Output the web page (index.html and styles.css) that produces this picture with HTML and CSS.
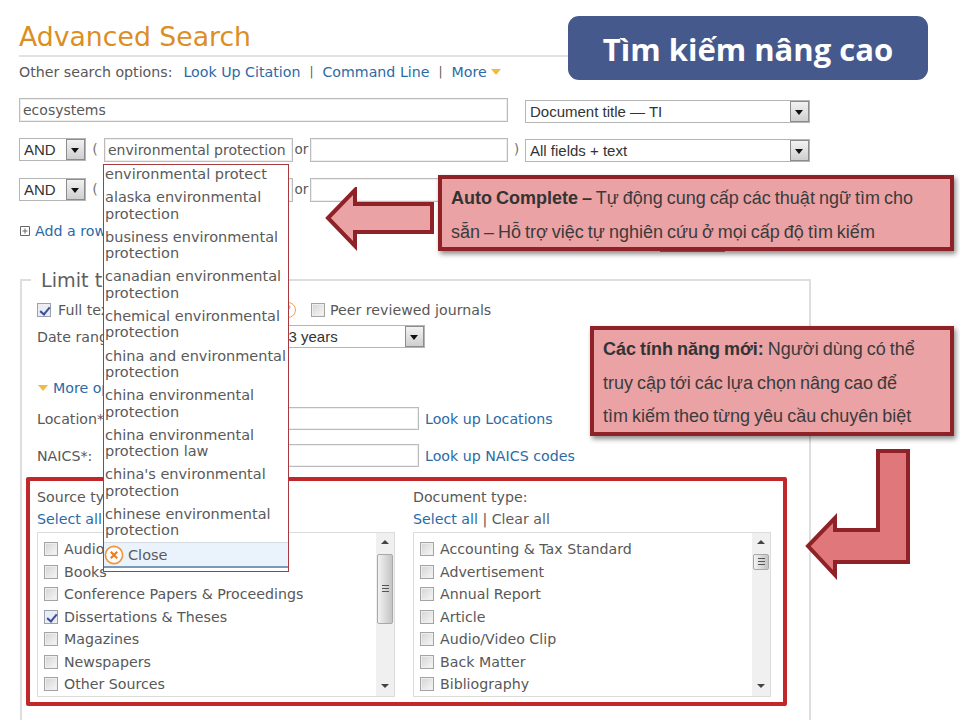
FILE: index.html
```html
<!DOCTYPE html>
<html lang="vi">
<head>
<meta charset="utf-8">
<title>Advanced Search</title>
<link rel="stylesheet" href="styles.css">
</head>
<body>
<main class="page">
  <h1 class="title">Advanced Search</h1>
  <nav class="options">
    <span>Other search options:</span>
    <a class="link first">Look Up Citation</a><span class="sep">|</span>
    <a class="link">Command Line</a><span class="sep">|</span>
    <a class="link">More</a><span class="tri"></span>
  </nav>

  <div class="row row-1">
    <div class="field wide">ecosystems</div>
    <div class="select sel-field"><span class="sel-text">Document title — TI</span><span class="sel-btn"></span></div>
  </div>
  <div class="row row-2">
    <div class="select sel-and"><span class="sel-text">AND</span><span class="sel-btn"></span></div>
    <span class="paren">(</span>
    <div class="field term">environmental protection</div>
    <span class="or">or</span>
    <div class="field term2"></div>
    <span class="paren close-paren">)</span>
    <div class="select sel-field"><span class="sel-text">All fields + text</span><span class="sel-btn"></span></div>
  </div>
  <div class="row row-3">
    <div class="select sel-and"><span class="sel-text">AND</span><span class="sel-btn"></span></div>
    <span class="paren">(</span>
    <div class="field term"></div>
    <span class="or">or</span>
    <div class="field term2"></div>
  </div>
  <div class="add-row">
    <svg class="plus" width="10" height="10" viewBox="0 0 10 10"><path d="M.5.5h9v9h-9zM2.5 5h5M5 2.5v5" fill="none" stroke="#666"/></svg>
    <a class="link">Add a row</a>
  </div>
  <div class="search-btn"></div>

  <section class="limit">
    <h2 class="legend">Limit to:</h2>
    <div class="limit-row fulltext">
      <span class="check on"></span><span class="lbl ft-lbl">Full text</span>
      <span class="help">?</span>
      <span class="check"></span><span class="lbl peer-lbl">Peer reviewed journals</span>
    </div>
    <div class="limit-row date">
      <span class="lbl date-lbl">Date range:</span>
      <div class="select sel-date"><span class="sel-text">Last 3 years</span><span class="sel-btn"></span></div>
    </div>
    <div class="more"><span class="tri"></span><a class="link">More options</a></div>
    <div class="limit-row lookup loc">
      <span class="lbl lookup-lbl">Location*:</span><div class="field lookup-in"></div><a class="link">Look up Locations</a>
    </div>
    <div class="limit-row lookup naics">
      <span class="lbl lookup-lbl">NAICS*:</span><div class="field lookup-in"></div><a class="link">Look up NAICS codes</a>
    </div>

    <div class="highlight">
      <div class="col">
        <div class="col-head">Source type:</div>
        <div class="col-sel"><a class="link">Select all</a> <span>| Clear all</span></div>
        <div class="list">
          <ul class="items">
            <li><span class="check"></span>Audio &amp; Video Works</li>
            <li><span class="check"></span>Books</li>
            <li><span class="check"></span>Conference Papers &amp; Proceedings</li>
            <li><span class="check on"></span>Dissertations &amp; Theses</li>
            <li><span class="check"></span>Magazines</li>
            <li><span class="check"></span>Newspapers</li>
            <li><span class="check"></span>Other Sources</li>
          </ul>
          <div class="scroll"><span class="up"></span><span class="thumb tall"><i></i></span><span class="down"></span></div>
        </div>
      </div>
      <div class="col">
        <div class="col-head">Document type:</div>
        <div class="col-sel"><a class="link">Select all</a> <span>| Clear all</span></div>
        <div class="list">
          <ul class="items">
            <li><span class="check"></span>Accounting &amp; Tax Standard</li>
            <li><span class="check"></span>Advertisement</li>
            <li><span class="check"></span>Annual Report</li>
            <li><span class="check"></span>Article</li>
            <li><span class="check"></span>Audio/Video Clip</li>
            <li><span class="check"></span>Back Matter</li>
            <li><span class="check"></span>Bibliography</li>
          </ul>
          <div class="scroll"><span class="up"></span><span class="thumb short"><i></i></span><span class="down"></span></div>
        </div>
      </div>
    </div>
  </section>
</main>

<div class="suggest">
  <ul class="suggest-list">
    <li>environmental protect</li>
    <li>alaska environmental protection</li>
    <li>business environmental protection</li>
    <li>canadian environmental protection</li>
    <li>chemical environmental protection</li>
    <li>china and environmental protection</li>
    <li>china environmental protection</li>
    <li>china environmental protection law</li>
    <li>china's environmental protection</li>
    <li>chinese environmental protection</li>
  </ul>
  <div class="suggest-close">
    <svg width="20" height="20" viewBox="0 0 20 20"><circle cx="10" cy="10" r="8.6" fill="#fff" stroke="#f0963a" stroke-width="1.6"/><path d="M6.8 6.8l6.4 6.4M13.2 6.8l-6.4 6.4" stroke="#ee7d22" stroke-width="2.2"/></svg>
    <span>Close</span>
  </div>
</div>

<div class="badge">Tìm kiếm nâng cao</div>

<div class="callout c1">
  <p class="line"><b>Auto Complete –</b> Tự động cung cấp các thuật ngữ tìm cho</p>
  <p class="line">sẵn – Hỗ trợ việc tự nghiên cứu ở mọi cấp độ tìm kiếm</p>
</div>
<div class="callout c2">
  <p class="line"><b>Các tính năng mới:</b> Người dùng có thể</p>
  <p class="line">truy cập tới các lựa chọn nâng cao để</p>
  <p class="line">tìm kiếm theo từng yêu cầu chuyên biệt</p>
</div>

<svg class="arrow a1" width="116" height="66" viewBox="0 0 116 66"><path d="M4 31L31 3V17H108V45H31V59Z" fill="#eba2a5" stroke="#8e2227" stroke-width="4"/></svg>
<svg class="arrow a2" width="112" height="135" viewBox="0 0 112 135"><path d="M75 3H105V114H32V127L5 98L32 70V82H75Z" fill="#e0777b" stroke="#8e2227" stroke-width="4"/></svg>
</body>
</html>
```
FILE: styles.css
```css
* { box-sizing: border-box; }
html, body { margin: 0; padding: 0; }
body {
  width: 960px; height: 720px; overflow: hidden; position: relative; background: #fff;
  font-family: "DejaVu Sans", Verdana, sans-serif; font-size: 14.2px; color: #585858;
}
.page { padding: 0 0 0 19px; height: 720px; }
ul { list-style: none; margin: 0; padding: 0; }
.link { color: #2b6aa6; }

.title {
  margin: 0; height: 57px; padding-top: 19px; width: 560px;
  font-size: 26.7px; line-height: 36px; font-weight: 400; color: #dc8e22;
  border-bottom: 2px solid #e2e2e2;
}
.options { display: flex; align-items: center; height: 20px; margin-top: 5px; }
.options .first { margin-left: 11px; }
.sep { margin: 0 9px; font-size: 12px; }
.tri { display: inline-block; width: 0; height: 0; border: 5px solid transparent; border-top: 6px solid #f5b93b; border-bottom: 0; }
.options .tri { margin-left: 4px; }

.row { display: flex; align-items: flex-start; }
.row-1 { margin-top: 16px; }
.row-2 { margin-top: 15px; }
.row-3 { margin-top: 16px; }
.field { height: 24px; line-height: 22px; padding-left: 3px; border: 1px solid #bbb; box-shadow: inset 0 0 0 1px #eee; white-space: nowrap; background: #fff; font-size: 14px; }
.wide { width: 489px; }
.term { width: 189px; }
.term2 { width: 198px; }
.or { width: 17px; text-align: center; line-height: 22px; font-size: 13.5px; }
.paren { width: 18px; text-align: center; line-height: 22px; color: #777; }
.close-paren { width: 17px; }
.select {
  display: flex; flex: none; height: 23px; border: 1px solid #b5b5b5; background: #fff; font-family: "Liberation Sans", Arial, sans-serif;
  color: #333; font-size: 15px; align-items: stretch; justify-content: space-between;
}
.sel-text { line-height: 22px; padding-left: 4px; white-space: nowrap; }
.sel-btn { width: 19px; position: relative; background: linear-gradient(#f2f2f2, #cfcfcf); border: 1px solid #8c8c8c; }
.sel-btn::after { content: ""; position: absolute; left: 4px; top: 8px; border: 4px solid transparent; border-top: 5px solid #111; border-bottom: 0; }
.sel-field { width: 285px; }
.row-1 .sel-field { margin: 2px 0 0 17px; }
.row-2 .sel-field { margin-top: 1px; }
.sel-and { width: 67px; }
.add-row { display: flex; align-items: center; gap: 5px; margin: 19px 0 0 1px; height: 20px; }
.plus { flex: none; }
.search-btn { position: absolute; left: 660px; top: 248px; width: 65px; height: 4px; background: #c2842b; }

.limit { position: relative; margin: 38px 0 0 1px; width: 791px; height: 450px; border: 2px solid #dedede; border-bottom: 0; padding: 0 0 0 15px; }
.legend { margin: -12px 0 0 -6px; width: max-content; padding: 0 6px 0 10px; height: 24px; background: #fff; font-weight: 400; font-size: 19.2px; line-height: 24px; color: #5e5e5e; }
.limit-row { display: flex; align-items: center; }
.check { display: inline-block; flex: none; width: 14px; height: 14px; border: 1px solid #a4a4a4; background: linear-gradient(135deg, #d4d4d4, #f7f7f7); box-shadow: inset 0 0 0 1px #eee; position: relative; }
.check.on { background: #e8ecf6; border-color: #9aa0ae; }
.check.on::after { content: ""; position: absolute; left: 4px; top: 1px; width: 4px; height: 8px; border: solid #3b4f9a; border-width: 0 2px 2px 0; transform: rotate(40deg); }
.fulltext { height: 20px; margin-top: 7px; }
.ft-lbl { width: 222px; flex: none; margin-left: 7px; }
.help { width: 16px; height: 16px; flex: none; margin-right: 15px; border: 1.5px solid #f1a545; border-radius: 50%; color: #f1a545; font-weight: 700; font-size: 11px; line-height: 13px; text-align: center; }
.peer-lbl { margin-left: 5px; }
.date { height: 23px; margin-top: 5px; }
.date-lbl { width: 163px; flex: none; }
.sel-date { width: 225px; }
.sel-date .sel-text { padding-left: 55px; }
.more { display: flex; align-items: center; gap: 5px; margin: 30px 0 0 1px; height: 20px; }
.lookup { height: 23px; }
.loc { margin-top: 9px; }
.naics { margin-top: 14px; }
.lookup-lbl { width: 177px; flex: none; }
.lookup-in { width: 205px; height: 23px; margin-right: 6px; flex: none; }

.highlight {
  position: absolute; left: 4px; top: 196px; width: 761px; height: 229px; border: 4px solid #c0282b; border-radius: 2px; background: #fff;
  display: flex; padding: 0 0 0 7px; gap: 18px;
}
.col { width: 358px; flex: none; }
.col-head { height: 22px; line-height: 22px; margin-top: 5px; }
.col-sel { height: 22px; line-height: 22px; }
.col-sel span { color: #5c5c5c; }
.list { display: flex; height: 165px; margin-top: 2px; border: 1px solid #dcdcdc; }
.items { flex: 1; padding: 5px 0 0 6px; }
.items li { display: flex; align-items: center; height: 22.5px; gap: 6px; }
.scroll { width: 18px; flex: none; display: flex; flex-direction: column; background: #f0f0f0; position: relative; }
.up, .down { position: absolute; left: 5px; width: 0; height: 0; border: 4px solid transparent; }
.up { top: 7px; border-bottom: 4px solid #444; border-top: 0; }
.down { bottom: 8px; border-top: 4px solid #444; border-bottom: 0; }
.thumb { position: absolute; left: 1px; top: 21px; width: 16px; border: 1px solid #a8a8a8; border-radius: 2px; background: linear-gradient(90deg, #f2f2f2, #c4c4c4); }
.thumb i { position: absolute; left: 4px; top: 50%; width: 7px; height: 7px; margin-top: -4px; border-top: 1px solid #555; border-bottom: 1px solid #555; background: linear-gradient(#555, #555) 0 2px/100% 1px no-repeat; }
.tall { height: 70px; }
.short { height: 16px; }

.suggest {
  position: absolute; left: 103px; top: 164px; width: 186px; height: 408px; border: 1px solid #a83a3e; background: #fff;
  font-size: 14.5px; line-height: 16.4px; color: #5a5a5a; z-index: 1;
}
.suggest-list { height: 377px; padding: 1px 0 0 1px; }
.suggest-list li { padding-bottom: 6.8px; width: 184px; }
.suggest-close { display: flex; align-items: center; gap: 4px; height: 26px; background: #eaf3fb; border-top: 1px solid #d5dbe2; border-bottom: 2px solid #7b97bb; padding-left: 0; line-height: 22px; }

.badge {
  position: absolute; left: 568px; top: 16px; width: 360px; height: 64px; border-radius: 11px; background: #46598c; color: #fff;
  font-family: "Open Sans", sans-serif; font-weight: 700; font-size: 31px; line-height: 66px; text-align: center; z-index: 2;
}
.callout {
  position: absolute; border: 4px solid #8e2227; background: #eba2a5; color: #3b3b3b; font-family: "Liberation Sans", Arial, sans-serif;
  font-size: 18px; line-height: 33.6px; box-shadow: 2px 3px 5px rgba(0,0,0,.45); z-index: 2; padding: 3px 0 0 9px; word-spacing: -1px;
}
.line { margin: 0; white-space: nowrap; }
.callout b { color: #333; }
.c1 { left: 438px; top: 175px; width: 516px; height: 76px; }
.c2 { left: 590px; top: 326px; width: 364px; height: 110px; }
.arrow { position: absolute; z-index: 2; }
.a1 { left: 324px; top: 187px; }
.a2 { left: 803px; top: 448px; }
```
